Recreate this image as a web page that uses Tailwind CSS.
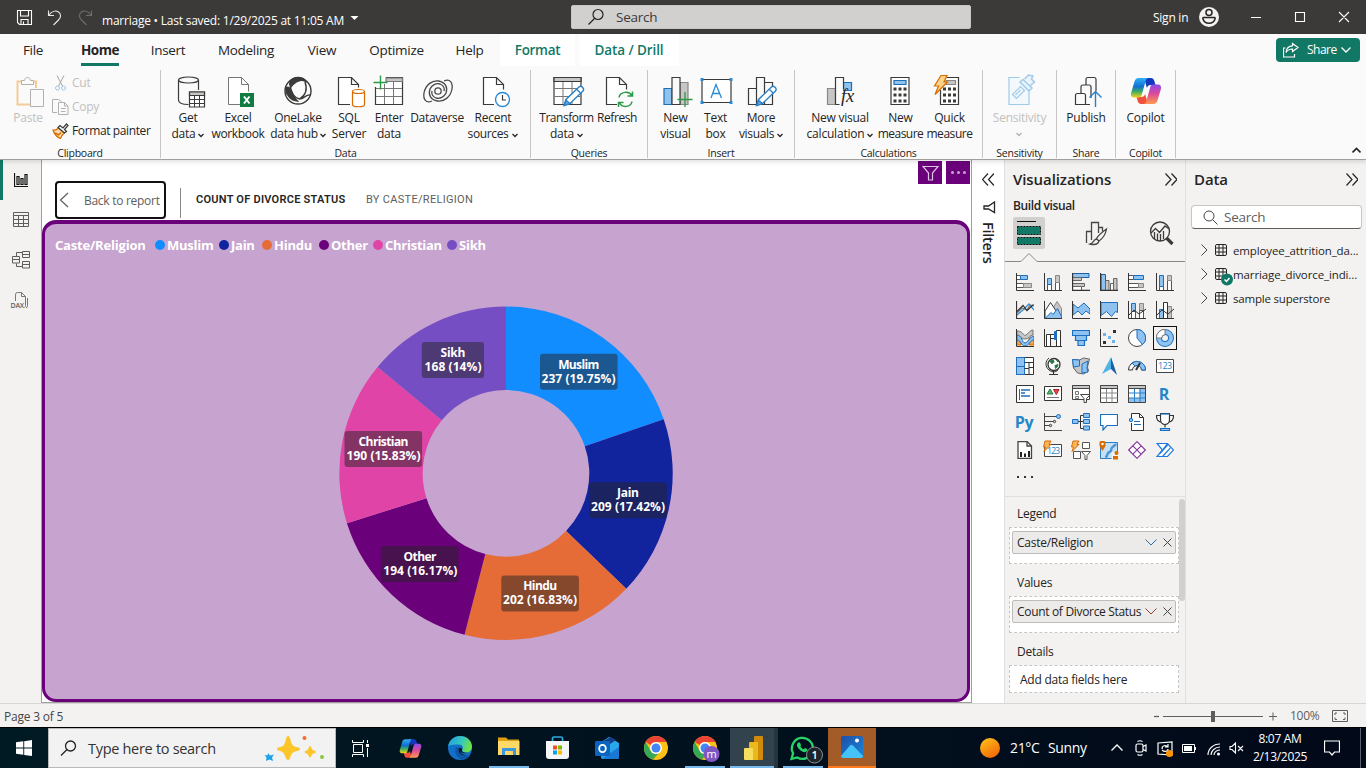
<!DOCTYPE html>
<html lang="en">
<head>
<meta charset="utf-8">
<title>marriage - Power BI Desktop</title>
<script src="https://cdn.jsdelivr.net/npm/@tailwindcss/browser@4"></script>
</head>
<body class="w-[1366px] h-[768px] overflow-hidden flex flex-col bg-[#f3f2f1] text-[#252423] text-[12px] leading-4 tracking-[-0.25px] whitespace-nowrap font-['Open_Sans','Noto_Sans',sans-serif]">

<!-- Title bar -->
<header class="h-[34px] shrink-0 bg-[#3b3a39] text-white flex items-center">
  <svg class="ml-4 mt-[1px]" width="17" height="17" viewBox="0 0 17 17" fill="none" stroke="#fff" stroke-width="1.1"><path d="M1.5 1.5h14v14h-12l-2-2zM4.500 1.500v5.500h8v-5.500M5 15.500v-5h7v5M7.500 15v-2.500"/></svg>
  <svg class="ml-[14px]" width="16" height="17" viewBox="0 0 16 17" fill="none" stroke="#e8e8e8" stroke-width="1.1"><path d="M1.500 1.500v5h5.500M1.500 6.500c3-4 7-5.500 10-3.500 3 2.200 2.500 5.500 0 8L6.500 16"/></svg>
  <svg class="ml-[15px]" width="16" height="17" viewBox="0 0 16 17" fill="none" stroke="#6e6d6b" stroke-width="1.1"><path d="M13.500 1.500v5H8M13.500 6.500c-3-4-7-5.500-10-3.500C.500 5.200 1 8.500 3.500 11l5 5"/></svg>
  <span class="ml-[8px] mt-[7px] w-[243px] tracking-[-0.23px]">marriage • Last saved: 1/29/2025 at 11:05 AM</span>
  <svg class="ml-[5px] mt-[1px]" width="9" height="6"><path d="M.5 1h8L4.500 5z" fill="#fff"/></svg>
  <div class="ml-[212px] w-[400px] h-[24px] bg-[#d2d0ce] border border-[#c8c6c4] rounded-[2px] flex items-center text-[#3b3a39] text-[13.500px]">
    <svg class="ml-[15px]" width="18" height="18" viewBox="0 0 18 18" fill="none" stroke="#252423" stroke-width="1.200"><circle cx="11" cy="6.500" r="5"/><path d="M7.500 10.500L1.500 16.500"/></svg>
    <span class="ml-[11px]">Search</span>
  </div>
  <span class="ml-[182px] mt-[2px] w-[36px]">Sign in</span>
  <svg class="ml-[10px] mt-[-1px]" width="20" height="20" viewBox="0 0 20 20"><circle cx="10" cy="10" r="10" fill="#f3f2f1"/><g fill="none" stroke="#252423" stroke-width="1.500"><circle cx="10" cy="5.500" r="3"/><path d="M4.500 10.500h11c.6 0 .8.500.6 1.200-.8 3-3.300 4.600-6.100 4.600s-5.300-1.600-6.100-4.600c-.2-.7 0-1.200.6-1.200z"/></g></svg>
  <svg class="ml-[32px]" width="100" height="12" viewBox="0 0 100 12" fill="none" stroke="#fff" stroke-width="1.100"><path d="M0 6.500h10M44.500 1.500h9v9h-9zM88 1l10 10M98 1L88 11"/></svg>
</header>

<!-- Ribbon -->
<section class="relative z-10 h-[126px] shrink-0 bg-[#fafafa] border-b border-[#a19f9d] shadow-[0_2px_4px_rgba(0,0,0,0.12)] flex flex-col">
  <nav class="h-[32px] flex text-[13.500px] tracking-[-0.300px]">
    <div class="w-[66px] flex items-center justify-center">File</div>
    <div class="w-[68px] flex items-center justify-center font-bold"><span class="h-full flex items-center border-b-[3px] border-[#117865] pt-[2px] w-[38px] justify-center tracking-[-0.500px]">Home</span></div>
    <div class="w-[68px] flex items-center justify-center">Insert</div>
    <div class="w-[88px] flex items-center justify-center">Modeling</div>
    <div class="w-[64px] flex items-center justify-center">View</div>
    <div class="w-[85px] flex items-center justify-center">Optimize</div>
    <div class="w-[61px] flex items-center justify-center">Help</div>
    <div class="w-[75px] mr-1 flex items-center justify-center bg-white text-[#117865] font-semibold">Format</div>
    <div class="w-[100px] flex items-center justify-center bg-white text-[#117865] font-semibold tracking-[-0.100px]">Data / Drill</div>
    <div class="ml-[597px] mt-[4px] w-[84px] h-[24px] rounded-[4px] bg-[#117865] text-white font-medium text-[12px] flex items-center">
      <svg class="ml-[7px] shrink-0" width="16" height="16" viewBox="0 0 16 16" fill="none" stroke="#fff" stroke-width="1.200"><path d="M2.500 6h-2v9h11v-3"/><path d="M9.500 1.500l5.500 4-5.500 4v-2.500c-3 0-5 1-6.500 3.500.3-4 2.500-6.500 6.500-6.700z"/></svg>
      <span class="ml-[8px] w-[30px] tracking-[-0.500px]">Share</span>
      <svg class="ml-[4px] shrink-0" width="10" height="6" fill="none" stroke="#fff" stroke-width="1.300"><path d="M.5.500l4.500 4.500L9.500.500"/></svg>
    </div>
  </nav>

  <div class="h-[93px] pt-[4px] flex">
    <!-- Clipboard -->
    <div class="w-[161px] h-[88px] border-r border-[#c8c6c4] flex flex-col">
      <div class="h-[74px] flex">
        <div class="w-[56px] flex flex-col items-center text-[#c2c0be]">
          <svg class="mt-[6px] shrink-0" width="32" height="32" viewBox="12 76 32 32" fill="none" stroke="#b3b1af"><path d="M24 81.500h-6.500v23h12.500M36 88v-6.500h-6" stroke="#f2cb96" stroke-width="2"/><path d="M21.500 84.500v-4h3c0-4 6-4 6 0h3v4z" fill="#fafafa"/><path d="M30.500 89.500h13v17h-13z" fill="#fafafa"/></svg>
          <span class="mt-[2px]">Paste</span>
        </div>
        <div class="flex flex-col pt-[1px] text-[#c2c0be]">
          <div class="h-[24px] flex items-center -ml-[1px]"><svg width="11" height="16" viewBox="0 0 11 16" fill="none" stroke="#a6a4a2"><path d="M2 .500l5.500 10.500M9 .500L3.500 11"/><g stroke="#9cc7e6"><circle cx="2.500" cy="13" r="2"/><circle cx="8.500" cy="13" r="2"/></g></svg><span class="ml-[6px]">Cut</span></div>
          <div class="h-[24px] flex items-center -ml-[4px]"><svg width="17" height="16" viewBox="0 0 17 16" fill="none" stroke="#b3b1af"><path d="M5 13.500H.5V.500h6l3 2"/><path d="M6.500 3.500h6l3.500 3.500v8.500H6.500zM12.500 3.500v3.500H16M9 9.500h4.500M9 12.500h4.500"/></svg><span class="ml-[3px]">Copy</span></div>
          <div class="h-[24px] flex items-center -ml-[4px] text-[#252423]"><svg width="17" height="16" viewBox="0 0 17 16" fill="none"><path d="M1 7c2.500.500 4-.5 5.500-2l5.500 5c-2 2-3 3.500-3.500 5.500C6 14.500 2.500 12 1 7z" fill="#fbdcae" stroke="#d86c00" stroke-width="1.200"/><path d="M3 10l3 1.500M6 12.500l3-3" stroke="#d86c00" stroke-width="1.500"/><path d="M6 4.500l2-2 3 2.500 3.500-4 1.500 1.500L12.500 6.500l2 2L12.500 10z" fill="#fafafa" stroke="#3b3a39" stroke-width="1.200"/></svg><span class="ml-[3px] tracking-[-0.380px]">Format painter</span></div>
        </div>
      </div>
      <div class="text-center text-[10.500px] h-[14px] leading-[19px]">Clipboard</div>
    </div>

    <!-- Data -->
    <div class="w-[370px] h-[88px] border-r border-[#c8c6c4] flex flex-col">
      <div class="h-[74px] flex pl-[4px] pt-[6px] text-center">
        <div class="w-[46px] flex flex-col items-center"><svg class="shrink-0 overflow-visible mb-[2px]" width="32" height="32" viewBox="172 76 32 32" fill="none" stroke="#3b3a39" stroke-width="1.200"><path d="M178.500 80v20c0 3 4 4.500 10 4.500M198.500 80v10"/><ellipse cx="188.500" cy="80" rx="10" ry="3"/><path d="M189.500 92h15v15h-15z" fill="#fff"/><path d="M189.500 92h15v3.500h-15z" fill="#c8c6c4"/><path d="M189.500 99.500h15M189.500 103.500h15M194.500 95.500v11.500M199.500 95.500v11.500" stroke-width="1"/></svg><span>Get</span><span class="flex items-center">data<svg class="ml-[3px] mt-[3px]" width="6" height="5" fill="none" stroke="#252423" stroke-width="1.300"><path d="M.5 1l2.500 2.500L5.500 1"/></svg></span></div>
        <div class="w-[54px] flex flex-col items-center"><svg class="shrink-0 overflow-visible mb-[2px]" width="32" height="32" viewBox="222 76 32 32" fill="none" stroke="#797775"><path d="M240 104.500h-11.500v-27h13l7 7v7M241.500 77.500v7h7" fill="#fff"/><path d="M240 93h14v14h-14z" fill="#107c41" stroke="none"/><path d="M244 96.500l5.500 7M249.500 96.500l-5.500 7" stroke="#fff" stroke-width="2"/></svg><span>Excel</span><span class="tracking-[-0.350px]">workbook</span></div>
        <div class="w-[66px] flex flex-col items-center"><svg class="shrink-0 overflow-visible mb-[2px]" width="32" height="32" viewBox="282 76 32 32" fill="none" stroke="#3b3a39" stroke-width="1.400"><circle cx="298" cy="91" r="13"/><path d="M290 81.500c4-6 14-5 15.500 0-3-2-8-1.500-12.500 3-1 1-2 2-2.500 3-.8-2-1-4-.5-6zM285.500 89c1.500-3 4.500-2 6 2 1.500 4.500 3 7.500 6 10-6 0-11-5-12-12z" fill="#3b3a39"/><path d="M305 82c2.500 7 1 13-5.500 17M290.500 87c.5 6 4 11 9 12 5 0 6-5 11.500-4"/></svg><span>OneLake</span><span class="flex items-center tracking-[-0.350px]">data hub<svg class="ml-[2px] mt-[3px]" width="6" height="5" fill="none" stroke="#252423" stroke-width="1.300"><path d="M.5 1l2.500 2.500L5.500 1"/></svg></span></div>
        <div class="w-[36px] flex flex-col items-center"><svg class="shrink-0 overflow-visible mb-[2px]" width="32" height="32" viewBox="333 76 32 32" fill="none" stroke="#3b3a39" stroke-width="1.200"><path d="M350 104.500h-11.500v-27h13l7 7v3M351.500 77.500v7h7" fill="#fff"/><path d="M352.500 91.500v13c0 3 12 3 12 0v-13" fill="#fff" stroke="#d86c00"/><ellipse cx="358.500" cy="91.500" rx="6" ry="2" fill="#fff" stroke="#d86c00"/></svg><span>SQL</span><span>Server</span></div>
        <div class="w-[44px] flex flex-col items-center"><svg class="shrink-0 overflow-visible mb-[2px]" width="32" height="32" viewBox="373 76 32 32" fill="none" stroke="#3b3a39" stroke-width="1.200"><path d="M375.500 87v17.500h27v-27H386" fill="#fff"/><path d="M386 78h16.500v3.500H386z" fill="#c8c6c4" stroke="#797775"/><path d="M376 88.500h26M376 96.500h26M384.500 84v20M393.500 82v22" stroke="#797775" stroke-width="1"/><path d="M373.500 82.500h14M380.500 75.500v14" stroke="#2b9a46" stroke-width="1.400"/></svg><span>Enter</span><span>data</span></div>
        <div class="w-[52px] flex flex-col items-center"><svg class="shrink-0 overflow-visible mb-[2px]" width="32" height="32" viewBox="421 76 32 32" fill="none" stroke="#4a4948" stroke-width="1.300"><g id="swirl"><path d="M432 101c-6 3-9-2-8-8 1.500-8 8-13 14.500-12 7 1.200 9.500 6.500 7.500 12-1.700 4.200-6 6-10 5-3-1-5-4-4-7"/></g><path transform="rotate(180 438 91)" d="M432 101c-6 3-9-2-8-8 1.500-8 8-13 14.500-12 7 1.200 9.500 6.500 7.500 12-1.700 4.200-6 6-10 5-3-1-5-4-4-7"/><circle cx="438" cy="91" r="3.200"/></svg><span class="tracking-[-0.300px]">Dataverse</span></div>
        <div class="w-[60px] flex flex-col items-center"><svg class="shrink-0 overflow-visible mb-[2px]" width="32" height="32" viewBox="477 76 32 32" fill="none" stroke="#3b3a39" stroke-width="1.200"><path d="M494 104.500h-10.500v-27h13l7 7v5M496.500 77.500v7h7" fill="#fff"/><circle cx="502.500" cy="99.500" r="7" fill="#fff" stroke="#2a8ad4" stroke-width="1.400"/><path d="M502.500 95v5h3.500"/></svg><span>Recent</span><span class="flex items-center tracking-[-0.350px]">sources<svg class="ml-[4px] mt-[3px]" width="6" height="5" fill="none" stroke="#252423" stroke-width="1.300"><path d="M.5 1l2.500 2.500L5.500 1"/></svg></span></div>
      </div>
      <div class="text-center text-[10.500px] h-[14px] leading-[19px]">Data</div>
    </div>

    <!-- Queries -->
    <div class="w-[117px] h-[88px] border-r border-[#c8c6c4] flex flex-col">
      <div class="h-[74px] flex pl-[6px] pt-[6px] text-center">
        <div class="w-[59px] flex flex-col items-center"><svg class="shrink-0 overflow-visible mb-[2px]" width="32" height="32" viewBox="550.500 76 32 32" fill="none" stroke="#3b3a39" stroke-width="1.200"><path d="M553.500 77.500h27v27h-27z" fill="#fff"/><path d="M553.500 77.500h27v4h-27z" fill="#c8c6c4"/><path d="M554 88.500h26M554 96.500h26M562.500 82v22M571.500 82v22" stroke="#797775" stroke-width="1"/><path d="M563.500 105.500l2-6 13-12.500c2-2 6 1.500 4 4l-13 12.500z" fill="#fff" stroke="#2a7fc5" stroke-width="1.400"/><path d="M564 105.500l1.500-5.500 4 3.500z" fill="#5ba7e8" stroke="#2a7fc5"/><path d="M576.500 89.500l3.500 3.500" stroke="#2a7fc5"/></svg><span class="tracking-[-0.450px]">Transform</span><span class="flex items-center">data<svg class="ml-[3px] mt-[3px]" width="6" height="5" fill="none" stroke="#252423" stroke-width="1.300"><path d="M.5 1l2.500 2.500L5.500 1"/></svg></span></div>
        <div class="w-[42px] flex flex-col items-center"><svg class="shrink-0 overflow-visible mb-[2px]" width="32" height="32" viewBox="601 76 32 32" fill="none" stroke="#3b3a39" stroke-width="1.200"><path d="M617 104.500h-10.500v-27h13l7 7v5M619.500 77.500v7h7" fill="#fff"/><path d="M618 92h16v15h-16z" fill="#fafafa" stroke="none"/><g stroke="#2b9a46" stroke-width="1.500"><path d="M619 97.500c1-6 10-7 13-2M632.500 91.500v4.500h-5M632 101.500c-1 6-10 6.500-12.500 1.500M618.500 107v-4.500h5"/></g></svg><span class="tracking-[-0.400px]">Refresh</span></div>
      </div>
      <div class="text-center text-[10.500px] h-[14px] leading-[19px]">Queries</div>
    </div>

    <!-- Insert -->
    <div class="w-[147px] h-[88px] border-r border-[#c8c6c4] flex flex-col">
      <div class="h-[74px] flex pl-[6px] pt-[6px] text-center">
        <div class="w-[43px] flex flex-col items-center"><svg class="shrink-0 overflow-visible mb-[2px]" width="32" height="32" viewBox="659.500 76 32 32" fill="none" stroke="#3b3a39" stroke-width="1.200"><path d="M679.500 82.500h8v22h-8z" fill="#c8c6c4" stroke="#8a8886"/><path d="M663.500 88.500h8v16h-8z" fill="#8fc2ee" stroke="#1b6fb5"/><path d="M671.500 77.500h8v27h-8z" fill="#fafafa"/><path d="M677 99.500h15M684.500 92v15" stroke="#2b9a46" stroke-width="1.300"/></svg><span>New</span><span>visual</span></div>
        <div class="w-[37px] flex flex-col items-center"><svg class="shrink-0 overflow-visible mb-[2px]" width="32" height="32" viewBox="699.500 76 32 32" fill="none" stroke="#3b3a39" stroke-width="1.200"><path d="M701.500 79.500h29v23h-29z" fill="#fff"/><path d="M710.500 98l5-13.500 5.500 13.500M712 93.500h7.500" stroke="#2a8ad4" stroke-width="1.300"/><path d="M700 78h3v3h-3zM729 78h3v3h-3zM700 101h3v3h-3zM729 101h3v3h-3z" fill="#2a8ad4" stroke="none"/></svg><span>Text</span><span>box</span></div>
        <div class="w-[54px] flex flex-col items-center"><svg class="shrink-0 overflow-visible mb-[2px]" width="32" height="32" viewBox="745 76 32 32" fill="none" stroke="#3b3a39" stroke-width="1.200"><path d="M748.500 88.500h8v16h-8zM764.500 82.500h8v22h-8zM756.500 77.500h8v27h-8z" fill="#fafafa"/><path d="M756.500 105.500l2-6 13-12.500c2-2 6 1.500 4 4l-13 12.500z" fill="#fff" stroke="#2a7fc5" stroke-width="1.400"/><path d="M757 105.500l1.500-5.500 4 3.500z" fill="#5ba7e8" stroke="#2a7fc5"/><path d="M769.500 89.500l3.500 3.500" stroke="#2a7fc5"/></svg><span>More</span><span class="flex items-center tracking-[-0.350px]">visuals<svg class="ml-[3px] mt-[3px]" width="6" height="5" fill="none" stroke="#252423" stroke-width="1.300"><path d="M.5 1l2.500 2.500L5.500 1"/></svg></span></div>
      </div>
      <div class="text-center text-[10.500px] h-[14px] leading-[19px]">Insert</div>
    </div>

    <!-- Calculations -->
    <div class="w-[188px] h-[88px] border-r border-[#c8c6c4] flex flex-col">
      <div class="h-[74px] flex pl-[6px] pt-[6px] text-center">
        <div class="w-[78px] flex flex-col items-center"><svg class="shrink-0 overflow-visible mb-[2px]" width="32" height="32" viewBox="824 76 32 32" fill="none" stroke="#3b3a39" stroke-width="1.200"><path d="M843.500 82.500h8v8h-8z" fill="#8fc2ee" stroke="#1b6fb5"/><path d="M827.500 88.500h8v16h-8z" fill="#c8c6c4" stroke="#8a8886"/><path d="M835.500 104.500v-27h8v12M835.500 104.500h4" fill="#fafafa"/><text x="841" y="101.500" font-family="Liberation Serif" font-style="italic" font-size="18.500" fill="#252423" stroke="none">fx</text></svg><span>New visual</span><span class="flex items-center tracking-[-0.200px]">calculation<svg class="ml-[3px] mt-[3px]" width="6" height="5" fill="none" stroke="#252423" stroke-width="1.300"><path d="M.5 1l2.500 2.500L5.500 1"/></svg></span></div>
        <div class="w-[43px] flex flex-col items-center"><svg class="shrink-0 overflow-visible mb-[2px]" width="32" height="32" viewBox="884.500 76 32 32" fill="none" stroke="#3b3a39" stroke-width="1.200"><path d="M890.500 77.500h18v27h-18z" fill="#fff"/><path d="M893.500 80.500h12v4h-12z" fill="#8fc2ee" stroke="#1b6fb5"/><path d="M893 89h13M893 95h13M893 101h13" stroke-width="3" stroke-dasharray="3 2"/></svg><span>New</span><span class="tracking-[-0.500px]">measure</span></div>
        <div class="w-[55px] flex flex-col items-center"><svg class="shrink-0 overflow-visible mb-[2px]" width="32" height="32" viewBox="934 76 32 32" fill="none" stroke="#3b3a39" stroke-width="1.200"><path d="M940.500 90v14.500h18v-27h-12" fill="#fff"/><path d="M946 80.500h9.500v4h-9.500z" fill="#c8c6c4" stroke="#8a8886"/><path d="M943 89h13M943 95h13M943 101h13" stroke-width="3" stroke-dasharray="3 2"/><path d="M941 75.500h6l-3 6.500h3.500L935 94.500l3.500-8.500h-4z" fill="#fbd28a" stroke="#d86c00"/></svg><span>Quick</span><span class="tracking-[-0.450px]">measure</span></div>
      </div>
      <div class="text-center text-[10.500px] h-[14px] leading-[19px]">Calculations</div>
    </div>

    <!-- Sensitivity -->
    <div class="w-[74px] h-[88px] border-r border-[#c8c6c4] flex flex-col items-center">
      <div class="h-[74px] pt-[6px] flex flex-col items-center text-[#c2c0be]"><svg class="shrink-0 overflow-visible mb-[2px]" width="32" height="32" viewBox="1003.500 76 32 32" fill="none" stroke="#9fcbea" stroke-width="1.200"><path d="M1020 77.500h-10.500v27h20v-13" fill="#f3f8fc"/><path d="M1013 94.500l8-8 4 4-8 8zM1016 95l5-5" /><path d="M1020.500 82l3-2.500 9 8.500-3 3zM1025 79l4-4 4.500 1-1.500 3 3 3-4 3.500" fill="#eaf4fb" stroke-width="1.500"/></svg><span>Sensitivity</span><svg class="mt-[6px]" width="6" height="5" fill="none" stroke="#b3b1af" stroke-width="1.300"><path d="M.5 1l2.500 2.500L5.500 1"/></svg></div>
      <div class="text-[10.500px] h-[14px] leading-[19px]">Sensitivity</div>
    </div>
    <!-- Share -->
    <div class="w-[59px] h-[88px] border-r border-[#c8c6c4] flex flex-col items-center">
      <div class="h-[74px] pt-[6px] flex flex-col items-center"><svg class="shrink-0 overflow-visible mb-[2px]" width="32" height="32" viewBox="1070 76 32 32" fill="none" stroke="#3b3a39" stroke-width="1.200"><path d="M1090 104.500h-14.500v-9q0-2 2-2h3.500v-6.500q0-2 2-2h3v-5.500q0-2 2-2h6q2 0 2 2V91M1081 93.500h2.500q2 0 2 2v9M1086 85h3q2 0 2 2v11"/><path d="M1095.500 107V92M1089.500 97.500l6-6 6 6" stroke="#2a7fc5" stroke-width="1.400"/></svg><span>Publish</span></div>
      <div class="text-[10.500px] h-[14px] leading-[19px]">Share</div>
    </div>
    <!-- Copilot -->
    <div class="w-[60px] h-[88px] border-r border-[#c8c6c4] flex flex-col items-center">
      <div class="h-[74px] pt-[6px] flex flex-col items-center">
        <svg class="shrink-0 mb-[2px] overflow-visible" width="32" height="32" viewBox="0 0 32 32">
          <defs>
            <linearGradient id="cpA" x1="0" y1="0" x2="0" y2="1"><stop offset="0" stop-color="#2fb0f5"/><stop offset=".45" stop-color="#0f6fd0"/><stop offset=".7" stop-color="#3fae5f"/><stop offset="1" stop-color="#f6d21c"/></linearGradient>
            <linearGradient id="cpB" x1="0" y1="0" x2="0" y2="1"><stop offset="0" stop-color="#8d4be8"/><stop offset=".45" stop-color="#d9489e"/><stop offset="1" stop-color="#ff9a4d"/></linearGradient>
          </defs>
          <g id="copilot"><path d="M14 2h7c2 0 2.800 1.200 3.500 3.500l1 3.500h-5c-2 0-3 1-3.600 3z" fill="#1439c0"/><path d="M18 28h-7c-2 0-2.800-1.200-3.500-3.500l-1-3.500h5c2 0 3-1 3.600-3z" fill="#f0503c"/><path d="M8.500 2H19c-2 0-2.800 1-3.500 3.500L11.700 19c-.6 1.800-1.500 2.500-3.200 2.500H4c-2.500 0-3.600-2-2.900-4.500L4.500 5.500C5.200 3.200 6.500 2 8.500 2z" fill="url(#cpA)"/><path d="M23.500 28H13c2 0 2.800-1 3.500-3.500L20.300 11c.6-1.800 1.500-2.500 3.200-2.500H28c2.500 0 3.600 2 2.900 4.500L27.500 24.500c-.7 2.300-2 3.500-4 3.500z" fill="url(#cpB)"/></g>
        </svg>
        <span>Copilot</span></div>
      <div class="text-[10.500px] h-[14px] leading-[19px]">Copilot</div>
    </div>
    <svg class="self-end ml-[176px] mb-[5px]" width="9" height="7" fill="none" stroke="#252423" stroke-width="1.700"><path d="M.5 5.500L4.500 1.500l4 4"/></svg>
  </div>
</section>

<!-- Workspace -->
<main class="h-[543px] shrink-0 flex">
  <!-- View switcher -->
  <aside class="w-[41px] shrink-0 flex flex-col">
    <div class="h-[40px] border-l-[3px] border-[#117865] flex items-center pl-[11px]"><svg width="14" height="14" viewBox="0 0 14 14" fill="none" stroke="#111" stroke-width="1.200"><path d="M.5 0v13.500H14M3 3.500h2v8H3zM7 5.500h2v6H7zM11 1.500h2v10h-2z"/></svg></div>
    <div class="h-[40px] flex items-center pl-[13px]"><svg width="16" height="16" viewBox="0 0 16 16" fill="none" stroke="#605e5c"><path d="M.5.500h15v14H.500zM.500 3.500h15M.500 7.500h15M.500 11.500h15M5.500 3.500v11M10.500 3.500v11"/></svg></div>
    <div class="h-[40px] flex items-center pl-[12px]"><svg width="19" height="18" viewBox="0 0 19 18" fill="none" stroke="#605e5c"><path d="M10.500.500h7v6h-7zM10.500 3.500h7M10.500 10.500h7v6.500h-7zM10.500 13.500h7M.500 5.500h7v6.500h-7zM.500 8.500h7M4.500 5V1.500h6M4.500 12.500v3h6"/></svg></div>
    <div class="h-[40px] flex items-center pl-[10px]"><svg class="overflow-visible" width="19" height="17" viewBox="0 0 19 17" fill="none" stroke="#797775"><path d="M5.500 9V2.500q0-2 2-2h4l4 4v9q0 1.500-1 2M11.500.500v4h4M17.500 6v7.500q0 2-1.500 2.500"/><text x="0.500" y="15.500" font-size="7" fill="#605e5c" stroke="none" letter-spacing="-.2" font-weight="600">DAX</text></svg></div>
  </aside>

  <!-- Report canvas -->
  <section class="relative w-[931px] shrink-0 bg-white border-l border-r border-[#a19f9d] border-b flex flex-col">
    <div class="h-[60px] shrink-0 flex">
      <div class="ml-[13px] mt-[21px] w-[111px] h-[38px] border-2 border-[#111] rounded-[4px] flex items-center text-[#605e5c]">
        <svg class="ml-[2px]" width="10" height="16" fill="none" stroke="#605e5c" stroke-width="1.200"><path d="M9 1L1.500 8 9 15"/></svg>
        <span class="ml-[15px] mt-[1px] tracking-[-0.280px]">Back to report</span>
      </div>
      <div class="ml-[14px] mt-[28px] h-[30px] w-px bg-[#8a8886]"></div>
      <span class="ml-[15px] mt-[32px] w-[150px] text-[11px] font-semibold tracking-[0.250px] font-['Roboto']">COUNT OF DIVORCE STATUS</span>
      <span class="ml-[20px] mt-[32px] text-[11px] text-[#605e5c] tracking-[0.300px] font-['Roboto']">BY CASTE/RELIGION</span>
    </div>
    <div class="w-[928px] h-[482px] shrink-0 rounded-[14px] border-[3px] border-t-[4px] border-[#6b007b] bg-[#c7a4cf] flex flex-col">
      <div class="mt-[13px] pl-[10px] h-[16px] flex items-center font-bold text-white text-[13px] tracking-[-0.250px]">
        <span class="w-[100px] tracking-[-0.200px]">Caste/Religion</span>
        <i class="w-[10px] h-[10px] rounded-full bg-[#118dff]"></i><span class="ml-[2px] w-[52px]">Muslim</span>
        <i class="w-[10px] h-[10px] rounded-full bg-[#12239e]"></i><span class="ml-[2px] w-[31px]">Jain</span>
        <i class="w-[10px] h-[10px] rounded-full bg-[#e66c37]"></i><span class="ml-[2px] w-[45px]">Hindu</span>
        <i class="w-[10px] h-[10px] rounded-full bg-[#6b007b]"></i><span class="ml-[2px] w-[42px]">Other</span>
        <i class="w-[10px] h-[10px] rounded-full bg-[#e044a7]"></i><span class="ml-[2px] w-[62px]">Christian</span>
        <i class="w-[10px] h-[10px] rounded-full bg-[#744ec2]"></i><span class="ml-[2px]">Sikh</span>
      </div>
      <svg class="ml-[285px] mt-[43px]" width="350" height="350" viewBox="330 296 350 350">
        <g transform="translate(506 473.300)">
          <path fill="#118dff" d="M0-166.700A166.700 166.700 0 0 1 157.710-54L78.800-27A83.300 83.300 0 0 0 0-83.300z"/>
          <path fill="#12239e" d="M157.710-54A166.700 166.700 0 0 1 120.320 115.380L60.100 57.700A83.300 83.300 0 0 0 78.800-27z"/>
          <path fill="#e66c37" d="M120.320 115.380A166.700 166.700 0 0 1-41.460 161.460L-20.700 80.700A83.300 83.300 0 0 0 60.100 57.700z"/>
          <path fill="#6b007b" d="M-41.460 161.460A166.700 166.700 0 0 1-159.070 49.850L-79.500 24.900A83.300 83.300 0 0 0-20.700 80.700z"/>
          <path fill="#e044a7" d="M-159.070 49.850A166.700 166.700 0 0 1-128.440-106.260L-64.200-53.100A83.300 83.300 0 0 0-79.500 24.900z"/>
          <path fill="#744ec2" d="M-128.440-106.260A166.700 166.700 0 0 1 0-166.700V-83.300A83.300 83.300 0 0 0-64.200-53.100z"/>
        </g>
        <g fill="#252423" fill-opacity=".5">
          <rect x="540" y="353.700" width="77.600" height="36" rx="3"/><rect x="589.200" y="482.300" width="77.600" height="36" rx="3"/><rect x="501.300" y="575.500" width="77.600" height="36" rx="3"/><rect x="381" y="546" width="77.600" height="36" rx="3"/><rect x="344.500" y="431" width="77.600" height="36" rx="3"/><rect x="421.800" y="342" width="62.200" height="36" rx="3"/>
        </g>
        <g fill="#fff" font-size="12" font-weight="700" text-anchor="middle" letter-spacing="0">
          <text x="578.700" y="369" textLength="41">Muslim</text><text x="578.500" y="383" textLength="74">237 (19.75%)</text>
          <text x="628" y="497" textLength="22">Jain</text><text x="628" y="511" textLength="74">209 (17.42%)</text>
          <text x="540.200" y="590" textLength="34">Hindu</text><text x="540" y="604" textLength="74">202 (16.83%)</text>
          <text x="420" y="561" textLength="33">Other</text><text x="420.300" y="575" textLength="74">194 (16.17%)</text>
          <text x="383.500" y="446" textLength="50">Christian</text><text x="383.500" y="460" textLength="74">190 (15.83%)</text>
          <text x="453" y="357" textLength="25">Sikh</text><text x="453" y="371" textLength="57">168 (14%)</text>
        </g>
      </svg>
    </div>
    <div class="absolute top-px right-px flex gap-[4px]">
      <div class="w-[24px] h-[23px] bg-[#6b007b] flex items-center justify-center"><svg width="17" height="16" viewBox="0 0 17 16" fill="none" stroke="#dcc4e2" stroke-width="1.200"><path d="M1 1.500h15l-5.500 6.500v7h-4V8z"/></svg></div>
      <div class="w-[24px] h-[23px] bg-[#6b007b] flex items-center justify-center gap-[3px]"><i class="w-[3px] h-[3px] rounded-full bg-[#c7a4cf]"></i><i class="w-[3px] h-[3px] rounded-full bg-[#c7a4cf]"></i><i class="w-[3px] h-[3px] rounded-full bg-[#c7a4cf]"></i></div>
    </div>
  </section>

  <!-- Filters -->
  <aside class="w-[33px] shrink-0 bg-white border-r border-[#e1dfdd] flex flex-col items-center">
    <svg class="mt-[13px]" width="12" height="13" fill="none" stroke="#252423" stroke-width="1.200"><path d="M6 .500L.500 6.500l5.500 6M12 .500L6.500 6.500l5.500 6"/></svg>
    <svg class="mt-[15px] ml-[3px]" width="13" height="13" fill="none" stroke="#252423" stroke-width="1.300"><path d="M11.500 1v10.500L5.500 8H1V5h4.500z"/></svg>
    <span class="mt-[8px] [writing-mode:vertical-rl] text-[14.500px] font-semibold">Filters</span>
  </aside>

  <!-- Visualizations -->
  <aside class="w-[181px] shrink-0 border-r border-[#e1dfdd] flex flex-col">
    <div class="h-[36px] pt-[2px] flex items-center pl-[8px]"><span class="w-[152px] text-[15px] font-semibold tracking-[-0.080px]">Visualizations</span><svg width="12" height="13" fill="none" stroke="#252423" stroke-width="1.200"><path d="M.500.500l5.500 6-5.500 6M6.500.500l5.500 6-5.500 6"/></svg></div>
    <div class="pl-[8px] pt-[2px] h-[21px] font-semibold leading-[16px] tracking-[-0.380px]">Build visual</div>
    <div class="h-[32px] pl-[8px] flex">
      <div class="w-[32px] h-[32px] bg-[#d2d0ce] rounded-[2px] flex items-center justify-center"><svg width="24" height="24" viewBox="0 0 24 24"><path d="M0 .500h19" stroke="#111"/><path d="M.500 5.500h23v8H.500zM.500 16.500h23v7H.500z" fill="#117865" stroke="#111" stroke-dasharray="2 1"/></svg></div>
      <svg class="ml-[40px] mt-[4px]" width="24" height="25" viewBox="0 0 24 25" fill="none" stroke="#484644" stroke-width="1.300"><path d="M1.500 22V10.500h5M6.500 19V1.500h7V12M13.500 6.500h4v4"/><path d="M21.500 8c-5 3.500-9 7-10 10l2.500 2c3-2 6.500-6.500 7.500-12zM11.500 18c-3 .500-3 4-6.500 5 4 1 8 .500 9-3z" fill="#f3f2f1"/></svg>
      <svg class="ml-[40px] mt-[4px]" width="25" height="25" viewBox="0 0 25 25" fill="none" stroke="#3b3a39" stroke-width="1.300"><circle cx="11" cy="10.500" r="9.500"/><path d="M2 12l4.500-4.500 4 4L16 5l3.500 2.500M5.500 11v7M8.500 12.500v7M11.500 13v7M14.500 10v8"/><path d="M17.500 17l6 6" stroke-width="3.200"/></svg>
    </div>
    <svg class="shrink-0 mt-[3px]" width="180" height="14" fill="none" stroke="#8a8886"><path d="M0 9.500h16l8-8 8 8h148"/></svg>

    <div class="h-[231px] shrink-0 border-b border-[#e1dfdd] pt-[2px] pl-[6px] flex flex-col">
      <div class="grid grid-cols-[repeat(6,28px)] auto-rows-[28px]">
        <!-- bar and column charts -->
        <svg class="m-[5px]" width="18" height="18" fill="none" stroke="#8a8886"><path d="M.500 2.500h4v4h-4zM.500 10.500h7v4h-7z" fill="#fff" stroke="#555"/><path d="M4.500 2.500h7v4h-7z" fill="#8fc2ee" stroke="#1b6fc0"/><path d="M7.500 10.500h8v4h-8z" fill="#c8c6c4"/><path d="M.500 0v17.500H18" stroke="#333"/></svg>
        <svg class="m-[5px]" width="18" height="18" fill="none" stroke="#8a8886"><path d="M3.500 11.500h4v6h-4zM11.500 9.500h4v8h-4z" fill="#fff" stroke="#555"/><path d="M3.500 5.500h4v6h-4z" fill="#8fc2ee" stroke="#1b6fc0"/><path d="M11.500 2.500h4v7h-4z" fill="#c8c6c4"/><path d="M.500 0v17.500H18" stroke="#333"/></svg>
        <svg class="m-[5px]" width="18" height="18" fill="none" stroke="#666"><path d="M.500.500h16.500v4H.500z" fill="#8fc2ee" stroke="#1b5fa0"/><path d="M.500 4.500h9v3h-9z" fill="#c8c6c4"/><path d="M.500 10.500h12v3h-12z" fill="#c8c6c4"/><path d="M.500 13.500h9v4h-9z" fill="#fff"/><path d="M.500 0v17.500H18" stroke="#333" stroke-width="1.300"/></svg>
        <svg class="m-[5px]" width="18" height="18" fill="none" stroke="#666"><path d="M1 1.500h4.500v16H1z" fill="#8fc2ee" stroke="#1b5fa0"/><path d="M5.500 7.500h3.500v10H5.500zM13.500 5.500h3.500v12h-3.500z" fill="#c8c6c4"/><path d="M10.500 10.500h3v7h-3z" fill="#fff"/><path d="M.500 0v17.500H18" stroke="#333" stroke-width="1.300"/></svg>
        <svg class="m-[5px]" width="18" height="18" fill="none" stroke="#8a8886"><path d="M.500 2.500h5v4h-5zM.500 10.500h10v4h-10z" fill="#fff" stroke="#555"/><path d="M5.500 2.500h10v4h-10z" fill="#8fc2ee" stroke="#1b6fc0"/><path d="M10.500 10.500h5v4h-5z" fill="#c8c6c4"/><path d="M.500 0v17.500H18" stroke="#333"/></svg>
        <svg class="m-[5px]" width="18" height="18" fill="none" stroke="#8a8886"><path d="M3.500 13.500h4v4h-4zM11.500 7.500h4v10h-4z" fill="#fff" stroke="#555"/><path d="M3.500 2.500h4v11h-4z" fill="#8fc2ee" stroke="#1b6fc0"/><path d="M11.500 2.500h4v5h-4z" fill="#c8c6c4"/><path d="M.500 0v17.500H18" stroke="#333"/></svg>
        <!-- line, area and combo charts -->
        <svg class="m-[5px]" width="18" height="18" fill="none" stroke="#333" stroke-width="1.200"><path d="M1 14l6-5 6-6 5 6" stroke="#2a8ad4"/><path d="M1 12l5-5 5 2 3-5 4 1" stroke="#777"/><path d="M1 10.500l6-6 4 5 6.500-6"/><path d="M.500 0v17.500H18"/></svg>
        <svg class="m-[5px]" width="18" height="18" fill="none" stroke="#333"><path d="M9 7l4-6.500 4.500 7v10H9z" fill="#c8c6c4" stroke="#8a8886"/><path d="M1 10L6.500 1.500l6 9v7H1z" fill="#fff"/><path d="M1 17.500l6-6 2 2 4.500-6 4 8v2z" fill="#8fc2ee" stroke="#1b6fc0"/><path d="M.500 0v17.500H18"/></svg>
        <svg class="m-[5px]" width="18" height="18" fill="none" stroke="#333"><path d="M1 3l5 4 6-5 6 6v5l-4-3-4 4-4-4-5 4z" fill="#8fc2ee" stroke="#1b6fc0"/><path d="M.500 0v17.500H18"/></svg>
        <svg class="m-[5px]" width="18" height="18" fill="none" stroke="#333"><path d="M1 1.500h16.500v10l-2-1-4 5-5-5-5.500 4z" fill="#8fc2ee" stroke="#1b6fc0"/><path d="M.500 0v17.500H18"/></svg>
        <svg class="m-[5px]" width="18" height="18" fill="none" stroke="#333"><path d="M3.500 2.500h4v8h-4z" fill="#8fc2ee" stroke="#1b6fc0"/><path d="M11.500 2.500h4v7h-4z" fill="#c8c6c4" stroke="#8a8886"/><path d="M3.500 10.500h4v7h-4zM11.500 9.500h4v8h-4z" fill="#fff" stroke="#555"/><path d="M1 14l5-5 5 4 7-5M.500 0v17.500H18"/></svg>
        <svg class="m-[5px]" width="18" height="18" fill="none" stroke="#333"><path d="M3.500 8.500h4v9h-4z" fill="#8fc2ee" stroke="#1b6fc0"/><path d="M11.500 5.500h4v12h-4z" fill="#c8c6c4" stroke="#8a8886"/><path d="M7.500 1.500h4v16h-4z" fill="#fff"/><path d="M1 14l5-5 6 4 6-5M.500 0v17.500H18"/></svg>
        <!-- ribbon, waterfall, funnel, scatter, pie, donut -->
        <svg class="m-[5px]" width="18" height="18" fill="none" stroke="#333"><path d="M1 2c7 0 6 6 9 4s4-5 7-5v5c-3 0-4 4-8 4S5 7 1 7z" fill="#c8c6c4" stroke="#777"/><path d="M1 9h4v7H1zM13 9h5v7h-5z" fill="#f3a24c" stroke="#d86c00"/><path d="M1 6c5 0 5 8 8 8s4-6 9-7v4c-4 0-5 6-9 6S5 11 1 11z" fill="#8fc2ee" stroke="#1b6fc0"/><path d="M.500 0v17.500H18"/></svg>
        <svg class="m-[5px]" width="18" height="18" fill="none" stroke="#333"><path d="M2.500 5.500h4v12h-4zM6.500 5.500h4v4h-4zM12.500 1.500h4v16h-4z" fill="#fff"/><path d="M10.500 2.500h2v8h-2z" fill="#1b6fc0" stroke="#1b6fc0"/><path d="M.500 0v17.500H18"/></svg>
        <svg class="m-[5px]" width="18" height="18" fill="#8fc2ee" stroke="#1b6fc0" stroke-width="1.200"><path d="M.5 1.500h17v5H.500zM3.500 6.500h11v5h-11zM6 11.500h6.500v5H6z"/></svg>
        <svg class="m-[5px]" width="18" height="18"><path d="M3 4h3v3H3zM8 7h3v3H8zM12 11h3v3h-3z" fill="#6db3ef"/><path d="M13 1h3v3h-3zM3 12h3v3H3z" fill="#333"/><path d="M.500 0v17.500H18" stroke="#333" fill="none"/></svg>
        <svg class="m-[5px]" width="18" height="18"><circle cx="9" cy="9" r="8.500" fill="#fff" stroke="#444"/><path d="M9 .500a8.500 8.500 0 0 1 5.500 15L9 9z" fill="#8fc2ee" stroke="#1b6fc0"/></svg>
        <div class="m-[2px] border border-[#111] flex items-center justify-center"><svg width="18" height="18" viewBox="0 0 18 18"><circle cx="9" cy="9" r="6" fill="none" stroke="#1b6fc0" stroke-width="6"/><circle cx="9" cy="9" r="6" fill="none" stroke="#8fc2ee" stroke-width="4"/><path d="M.300 9A8.700 8.700 0 0 1 9 .300v5.500A3.200 3.200 0 0 0 5.800 9z" fill="#fff" stroke="#777"/></svg></div>
        <!-- treemap, maps, gauge, card -->
        <svg class="m-[5px]" width="18" height="18" fill="#fff" stroke="#333"><path d="M.500.500h17v17H.500z"/><path d="M.500.500h8v9h-8zM.500 9.500h8v8h-8z" fill="#8fc2ee" stroke="#1b6fc0"/><path d="M8.500 5.500h9M13 5.500v12M8.500 11.500h4.500M13 10.500h4.500" /></svg>
        <svg class="m-[5px]" width="18" height="18" fill="none" stroke="#333"><circle cx="10" cy="7.500" r="6" fill="#fff" stroke-width="1.300"/><path d="M6.500 4c2-1.500 3.500-1 3.500.5S8 7 7 6zM11 8.500l3-1c0 2-1 3-2.500 4zM12.500 3.500l1.500.5v1z" fill="#2b7a46" stroke="#2b7a46"/><path d="M5 1C1 4 1 10 5 13s7 2 9 0M9.500 14v3M5 17.500h9"/></svg>
        <svg class="m-[5px]" width="18" height="18" fill="#c8c6c4" stroke="#666"><path d="M.500 2.500l7 .5 4-2 6 1-2 8 1 4-5 3-6-1-4-5z"/><path d="M.500 2.500l7 .5v6l-6 1zM10 7l6-3-1 7 1 4-6 1z" fill="#8fc2ee" stroke="#1b6fc0"/></svg>
        <svg class="m-[5px]" width="18" height="18"><path d="M11 0L2 17l9-5z" fill="#4fb3e8"/><path d="M11 0v12l6 6z" fill="#1b5f9e"/></svg>
        <svg class="m-[5px]" width="18" height="18" fill="#fff" stroke="#333"><path d="M.500 13a8.500 8.500 0 0 1 17 0h-4a4.500 4.500 0 0 0-9 0z"/><path d="M4 6a8.500 8.500 0 0 1 13.500 7h-4A4.500 4.500 0 0 0 7 9z" fill="#8fc2ee" stroke="#1b6fc0"/><path d="M8 13l4-7" stroke-width="2"/></svg>
        <svg class="m-[5px]" width="18" height="18"><path d="M.500 2.500h17v13H.500z" fill="#fff" stroke="#444"/><text x="2" y="12" font-size="9" fill="#2a7fc5" textLength="14">123</text></svg>
        <!-- multi-row card, kpi, slicer, table, matrix, R -->
        <svg class="m-[5px]" width="18" height="18" fill="none" stroke="#1b6fc0" stroke-width="1.500"><path d="M.500.500h17v17H.500z" fill="#fff" stroke="#333" stroke-width="1"/><path d="M5 5h9M5 8h4M5 11h9"/><path d="M3.500 4v11" stroke="#555" stroke-width="1"/></svg>
        <svg class="m-[5px]" width="18" height="18"><path d="M.500 1.500h17v14H.500z" fill="#fff" stroke="#333"/><path d="M3 9l3-5 3 5z" fill="#58b868" stroke="#2b7a46"/><path d="M9.500 4.500h5.500l-2.700 5z" fill="#e34b4b" stroke="#b02020"/><path d="M3 12.500h12" stroke="#777"/></svg>
        <svg class="m-[5px]" width="18" height="18" fill="none" stroke="#444"><path d="M.500.500h17v14H.500z" fill="#fff"/><path d="M.500.500h17v3H.500z" fill="#c8c6c4"/><path d="M3.500 6.500h3v3h-3zM3.500 11.500h3v2h-3z" stroke="#777"/><path d="M8.500 9.500h10l-4 4v4h-2.500v-4z" fill="#fff"/></svg>
        <svg class="m-[5px]" width="18" height="18" fill="none" stroke="#444"><path d="M.500.500h17v17H.500z" fill="#fff"/><path d="M.500.500h17v3H.500z" fill="#c8c6c4"/><path d="M.500 8h17M.500 13h17M6.500 4v13.500M12 4v13.500" stroke="#888"/></svg>
        <svg class="m-[5px]" width="18" height="18" fill="none" stroke="#444"><path d="M.500.500h17v17H.500z" fill="#fff"/><path d="M11.500 4h6v13.500H.500V13h11z" fill="#8fc2ee" stroke="none"/><path d="M.500.500h17v3H.500z" fill="#c8c6c4"/><path d="M.500 8h17M.500 13h17M6.500 4v13.500M12 4v13.500" stroke="#2a7fc5"/><path d="M.500.500h17v17H.500z"/></svg>
        <div class="flex items-center justify-center pr-[2px] text-[16px] font-bold text-[#2488c8]">R</div>
        <!-- python, key influencers, decomposition, Q&A, narrative, goals -->
        <div class="flex items-center justify-center pr-[2px] text-[16px] font-bold text-[#2488c8] tracking-[-0.400px]">Py</div>
        <svg class="m-[5px]" width="18" height="18" fill="none" stroke="#444"><path d="M.500 0v17.500H18M1 3.500h12M1 8.500h9M1 12.500h5"/><circle cx="14.500" cy="3.500" r="2" fill="#8fc2ee" stroke="#1b6fc0"/><circle cx="10.500" cy="8.500" r="1.200" fill="#ccc"/><circle cx="6.500" cy="12.500" r="1.200" fill="#ccc"/></svg>
        <svg class="m-[5px]" width="18" height="18" fill="#8fc2ee" stroke="#1b6fc0"><path d="M6 8.500h5M8.500 2.500v13M8.500 2.500h3M8.500 15.500h3" fill="none" stroke="#333"/><path d="M.500 6.500h5.500v4H.500zM11.500.500h6v4h-6zM11.500 6.500h6v4h-6zM11.500 13h6v4h-6z"/></svg>
        <svg class="m-[5px]" width="18" height="18" fill="#fff" stroke="#1b6fc0" stroke-width="1.200"><path d="M.500 1.500h17v11H7l-4 4.500v-4.500H.500z"/></svg>
        <svg class="m-[5px]" width="18" height="18" fill="none" stroke="#333"><path d="M3.500 5V.500h8l4 4v13h-12V10" fill="#fff"/><path d="M11.500.500v4h4" /><circle cx="3" cy="7" r="1.700" fill="#8fc2ee" stroke="#1b6fc0"/><path d="M6 8.500h6M6 11.500h7" stroke="#1b6fc0"/></svg>
        <svg class="m-[5px]" width="18" height="18" fill="#fff" stroke="#333" stroke-width="1.200"><path d="M4.500 2.500h-4c0 4 1 6 4.500 6.500M13.500 2.500h4c0 4-1 6-4.500 6.500"/><path d="M4.500.500h9v6c0 3-2 5-4.500 5s-4.500-2-4.500-5z"/><path d="M9 11.500v3"/><path d="M4.500 15.500h9v2h-9z" fill="#8fc2ee" stroke="#1b6fc0"/><path d="M4 1h10" stroke="#1b6fc0"/></svg>
        <!-- paginated report, new card, new slicer, arcgis, power apps, power automate -->
        <svg class="m-[5px]" width="18" height="18" fill="none" stroke="#444" stroke-width="1.300"><path d="M2 .500h9l4.500 4.500v12.500H2z" fill="#fff"/><path d="M11 .500v4.500h4.500"/><path d="M4 11h2v5H4zM8 12.500h2V16H8zM12 10h2v6h-2z" fill="#222" stroke="none"/></svg>
        <svg class="m-[5px] overflow-visible" width="18" height="18"><path d="M.500 3.500h17v12H.500z" fill="#fff" stroke="#444"/><text x="3" y="13" font-size="9" fill="#2a7fc5" textLength="13">123</text><path d="M1 0h6L5 3.500h2L0 10.500l1.500-4.500h-2z" fill="#f7b65c" stroke="#d86c00"/></svg>
        <svg class="m-[5px] overflow-visible" width="18" height="18" fill="#fff" stroke="#555"><path d="M10.500 1.500h7v6h-7zM1.500 10.500h7v7h-7z"/><path d="M9.500 10.500h9l-3.500 4v4h-2v-4z"/><path d="M1 0h6L5 3.500h2L0 10.500l1.500-4.500h-2z" fill="#f7b65c" stroke="#d86c00"/></svg>
        <svg class="m-[5px] overflow-visible" width="18" height="18"><path d="M.500 1.500h17v16H.500z" fill="#c5e1f7" stroke="#2a7fc5"/><path d="M16.500 3.500c-2 0-2 1.500-4 2.500s0 4-3 5-1 3-4 5.500" fill="none" stroke="#4a95d6" stroke-width="2.500"/><path d="M2.500 10L-.5 5V1.500q0-1.500 1.500-1.500h3q1.500 0 1.500 1.500V5z" fill="#d86c00"/><circle cx="2.500" cy="3" r="1.200" fill="#fff"/><path d="M11.500 11h8v8h-8z" fill="#f3f2f1"/><circle cx="16.500" cy="12" r="2" fill="#d86c00"/><path d="M13 15h5v3.500h-5z" fill="#d86c00"/></svg>
        <svg class="m-[5px]" width="18" height="18" fill="#fff" stroke="#8a3ca0" stroke-width="1.200"><path d="M9 .700L17.300 9 9 17.300.700 9z"/><path d="M4.900 4.900l8.200 8.200M13.100 4.900l-8.200 8.200"/></svg>
        <svg class="m-[5px]" width="18" height="18" fill="#fff" stroke="#1f7ae0" stroke-width="1.200"><path d="M1 2.500h10.500L17.500 9l-6 6.500H1L6.500 9z"/><path d="M6.500 9l5-6.500M4 12.500l8-9M6.500 15.500l6-6.500 2-2.500"/></svg>
      </div>
      <div class="mt-[12px] ml-[6px] flex gap-[5px]"><i class="w-[2px] h-[2px] bg-[#333]"></i><i class="w-[2px] h-[2px] bg-[#333]"></i><i class="w-[2px] h-[2px] bg-[#333]"></i></div>
    </div>

    <!-- Field wells -->
    <div class="flex-1 flex">
      <div class="w-[174px] pl-[4px] flex flex-col">
        <div class="h-[30px] pl-[8px] pt-[9px]">Legend</div>
        <div class="w-[170px] h-[37px] bg-white border border-dashed border-[#c8c6c4] p-[2px] pt-[3px]">
          <div class="w-[164px] h-[23px] bg-[#edebe9] border border-[#bebbb8] rounded-[2px] flex items-center pl-[4px]"><span class="w-[128px]">Caste/Religion</span><svg width="12" height="7" fill="none" stroke="#2a6fb0"><path d="M.500.500l5.500 5.500L11.500.500"/></svg><svg class="ml-[6px]" width="9" height="9" stroke="#444"><path d="M.500.500l8 8M8.500.500l-8 8"/></svg></div>
        </div>
        <div class="h-[32px] pl-[8px] pt-[11px]">Values</div>
        <div class="w-[170px] h-[37px] bg-white border border-dashed border-[#c8c6c4] p-[2px] pt-[3px]">
          <div class="w-[164px] h-[23px] bg-[#edebe9] border border-[#bebbb8] rounded-[2px] flex items-center pl-[4px]"><span class="w-[128px] tracking-[-0.320px]">Count of Divorce Status</span><svg width="12" height="7" fill="none" stroke="#8a4a30"><path d="M.500.500l5.500 5.500L11.500.500"/></svg><svg class="ml-[6px]" width="9" height="9" stroke="#444"><path d="M.500.500l8 8M8.500.500l-8 8"/></svg></div>
        </div>
        <div class="h-[32px] pl-[8px] pt-[11px]">Details</div>
        <div class="w-[170px] h-[28px] bg-white border border-dashed border-[#c8c6c4] flex items-center pl-[10px] pt-px">Add data fields here</div>
      </div>
      <div class="w-[6px] h-[102px] mt-[2px] rounded-[3px] bg-[#d2d0ce]"></div>
    </div>
  </aside>

  <!-- Data -->
  <aside class="w-[180px] shrink-0 flex flex-col">
    <div class="h-[36px] pt-[2px] flex items-center pl-[8px]"><span class="w-[152px] text-[15px] font-semibold tracking-[-0.100px]">Data</span><svg width="12" height="13" fill="none" stroke="#252423" stroke-width="1.200"><path d="M.500.500l5.500 6-5.500 6M6.500.500l5.500 6-5.500 6"/></svg></div>
    <div class="ml-[5px] mt-[9px] w-[171px] h-[24px] bg-white border border-[#c8c6c4] border-b-[#605e5c] rounded-[4px] flex items-center text-[13.500px] text-[#605e5c]"><svg class="ml-[11px]" width="15" height="15" fill="none" stroke="#484644"><circle cx="6" cy="6" r="5"/><path d="M9.500 9.500l5 5"/></svg><span class="ml-[6px]">Search</span></div>
    <div class="mt-[9px] pl-[15px] flex flex-col text-[11.500px]">
      <div class="h-[24px] flex items-center"><svg width="7" height="12" fill="none" stroke="#484644"><path d="M.500.500L6 6 .500 11.500"/></svg><svg class="ml-[7px]" width="12" height="12" fill="none" stroke="#252423"><rect x=".5" y=".5" width="11" height="11" rx="1.500"/><path d="M.500 4h11M.500 8h11M4 .500v11M8 .500v11"/></svg><span class="ml-[6px] mt-[2px] tracking-[-0.120px]">employee_attrition_da...</span></div>
      <div class="h-[24px] flex items-center"><svg width="7" height="12" fill="none" stroke="#484644"><path d="M.500.500L6 6 .500 11.500"/></svg><svg class="ml-[7px] overflow-visible" width="12" height="12" fill="none" stroke="#252423"><rect x=".5" y=".5" width="11" height="11" rx="1.500"/><path d="M.500 4h11M.500 8h11M4 .500v11M8 .500v11"/><circle cx="12" cy="11.500" r="6" fill="#117865" stroke="none"/><path d="M9.500 11.500l2 2 3-3.500" stroke="#fff" stroke-width="1.500"/></svg><span class="ml-[6px] mt-[2px] tracking-[-0.110px]">marriage_divorce_indi...</span></div>
      <div class="h-[24px] flex items-center"><svg width="7" height="12" fill="none" stroke="#484644"><path d="M.500.500L6 6 .500 11.500"/></svg><svg class="ml-[7px]" width="12" height="12" fill="none" stroke="#252423"><rect x=".5" y=".5" width="11" height="11" rx="1.500"/><path d="M.500 4h11M.500 8h11M4 .500v11M8 .500v11"/></svg><span class="ml-[6px] mt-[2px] tracking-[-0.200px]">sample superstore</span></div>
    </div>
  </aside>
</main>

<!-- Status bar -->
<footer class="h-[24px] shrink-0 border-t border-[#d8d6d4] flex items-center text-[#484644] text-[12px]">
  <span class="ml-[4px] mt-[3px] w-[1150px] tracking-[-0.200px]">Page 3 of 5</span>
  <svg width="124" height="12" viewBox="0 0 124 12" fill="none" stroke="#605e5c"><path d="M0 6.500h5" stroke-width="1.300"/><path d="M9 6.500h100M115 6.500h8M119 2.500v8"/><path d="M57 1h4v11h-4z" fill="#605e5c" stroke="none"/></svg>
  <span class="ml-[12px] mt-[1px] w-[30px] text-[#605e5c]">100%</span>
  <svg class="ml-[12px]" width="16" height="12" fill="none" stroke="#605e5c"><path d="M.500.500h15v11H.500zM3 5V3h2M11 3h2v2M13 7.500v2h-2M5 9.500H3v-2"/></svg>
</footer>

<!-- Windows taskbar -->
<footer class="h-[41px] shrink-0 border-t border-black bg-gradient-to-r from-[#001a24] to-[#020919] flex text-white">
  <div class="w-[48px] shrink-0 flex items-center justify-center"><svg width="16" height="16" fill="#fff"><path d="M0 2.300l7.300-1v6.300H0zM8.200 1.200L16 0v7.600H8.200zM0 8.500h7.300v6.300L0 13.800zM8.200 8.500H16V16l-7.800-1.100z"/></svg></div>
  <div class="w-[288px] shrink-0 bg-[#f2f2f2] border border-[#b8b8b8] flex items-center text-[#333] text-[14.500px] tracking-[-0.300px]">
    <svg class="ml-[11px] shrink-0" width="17" height="17" fill="none" stroke="#222" stroke-width="1.300"><circle cx="10.500" cy="6" r="5"/><path d="M7 9.500l-6 6"/></svg>
    <span class="ml-[11px] mt-px w-[176px] shrink-0">Type here to search</span>
    <svg class="shrink-0" width="62" height="26" viewBox="0 0 62 26"><path d="M24 1c2.500 0 2.500 7 5 9.500s7 1 7 3.500-5 1.500-7.500 4-2 7-4.500 7-2.500-5-5-7.500-6-1-6-3.500 4-1 6.500-3.500S21.500 1 24 1z" fill="#fcc52a"/><path d="M46 11c1.300 0 1.500 3 2.700 4s3.300.5 3.300 2-2.300 1-3.500 2-1.200 3.500-2.500 3.500-1.300-2.500-2.500-3.500-2.800-.5-2.800-2 1.600-1 2.800-2 1.200-4 2.500-4z" fill="#fcc52a"/><path d="M4 18l2 2.500 4-1-2 3 1 3.500-3.500-1.500L2 26l.5-3.500-2-2.500 3 .5z" fill="#1aa3e8"/><circle cx="40.500" cy="3" r="2" fill="#f26b35"/><circle cx="58" cy="22" r="2" fill="#8dc63f"/></svg>
  </div>
  <div class="w-[49px] shrink-0 flex items-center justify-center"><svg width="17" height="17" fill="none" stroke="#fff"><path d="M1.500 4.500h9v8h-9zM.500 0v2.500h11V0M.500 17v-2.500h11V17M15.500 0v3M15.500 8v9"/><path d="M14 4h3v3h-3z" fill="#fff" stroke="none"/></svg></div>
  <div class="w-[51px] shrink-0 flex items-center justify-center"><svg width="23" height="23" viewBox="0 0 32 30"><use href="#copilot"/></svg></div>
  <div class="w-[48px] shrink-0 flex items-center justify-center"><svg width="24" height="24" viewBox="0 0 24 24"><defs><linearGradient id="edG" x1="0" y1="0" x2="1" y2=".3"><stop offset="0" stop-color="#1f9ce0"/><stop offset=".6" stop-color="#35c7c0"/><stop offset="1" stop-color="#6be04c"/></linearGradient></defs><circle cx="12" cy="12" r="12" fill="#1270c8"/><path d="M0 11C1 4 6 0 12 0c7 0 12 5 12 10.500 0 4-3 6-6 6s-4.500-1.500-3.500-3c1-1.500.5-5-3.500-5C6 8.500 0 9 0 11z" fill="url(#edG)"/><path d="M9 13c0 5 5 8 12 6-5 1-10-1-9-6 .3-1.500-3-2-3 0z" fill="#001420"/><path d="M8 11c-2 5 0 11 7 13 3-.5 6-2.500 7.500-5C17 21 9 19 11 12z" fill="#0f58a8"/><path d="M11.500 12.500c1-2 3 0 2.500 1.500-.5 2 2 3.500 6 2.500-2 1.500-9 1-8.500-4z" fill="#001420"/></svg></div>
  <div class="w-[49px] shrink-0 flex justify-center"><div class="w-[40px] border-b-2 border-[#76b9ed] flex items-center justify-center pb-[1px]"><svg width="22" height="19"><path d="M0 .500h8l2 2h11v15H0z" fill="#e0a010"/><path d="M0 4h21.500v14H0z" fill="#ffd968"/><path d="M4 18v-7h14v7h-3v-4H7v4z" fill="#3a96dd"/></svg></div></div>
  <div class="w-[49px] shrink-0 flex items-center justify-center"><svg width="23" height="24"><path d="M6.500 7V2.500q0-1.500 1.500-1.500h7q1.500 0 1.500 1.500V7" fill="none" stroke="#2aaae2" stroke-width="1.700"/><path d="M0 5h23v15q0 3-3 3H3q-3 0-3-3z" fill="#f4f6f8"/><path d="M7 9.500h4v4H7z" fill="#f25022"/><path d="M12 9.500h4v4h-4z" fill="#7fba00"/><path d="M7 14.500h4v4H7z" fill="#00a4ef"/><path d="M12 14.500h4v4h-4z" fill="#ffb900"/></svg></div>
  <div class="w-[50px] shrink-0 flex items-center justify-center"><svg width="25" height="24"><path d="M6 6L14 1l10 6v14q0 2-2 2H8q-2 0-2-2z" fill="#28a8ea"/><path d="M8 5l8-4 5 3-9 6z" fill="#123f8c"/><path d="M24 11L8 22q0 1 2 1h12q2 0 2-2z" fill="#1a78d4"/><rect x="0" y="5" width="15" height="15" rx="1.500" fill="#0b64c0"/><ellipse cx="7.500" cy="12.500" rx="3.300" ry="3.700" fill="none" stroke="#fff" stroke-width="1.800"/></svg></div>
  <div class="w-[48px] shrink-0 flex items-center justify-center"><svg width="24" height="24" viewBox="0 0 24 24"><g id="chrome"><circle cx="12" cy="12" r="12" fill="#fbc116"/><path d="M12 0a12 12 0 0 1 10.400 6H12a6 6 0 0 0-5.200 3L1.600 6A12 12 0 0 1 12 0z" fill="#ea4335"/><path d="M1.600 6l5.200 9a6 6 0 0 0 5.200 3l-3 5.600A12 12 0 0 1 1.600 6z" fill="#34a853"/><path d="M12 18l-3 5.600L14 18z" fill="#34a853"/><circle cx="12" cy="12" r="6" fill="#fff"/><circle cx="12" cy="12" r="4.500" fill="#4285f4"/></g></svg></div>
  <div class="w-[50px] shrink-0 flex justify-center"><div class="w-[40px] border-b-2 border-[#76b9ed] flex items-center justify-center"><svg class="overflow-visible mt-[2px]" width="24" height="24" viewBox="0 0 24 24"><use href="#chrome"/><circle cx="18.500" cy="18" r="8" fill="#7e57c2"/><text x="18.500" y="21.500" font-size="11" fill="#fff" text-anchor="middle">m</text></svg></div></div>
  <div class="w-[48px] shrink-0 h-[40px] bg-[#33434e] border-r-[4px] border-[#26343f] flex items-center justify-center shadow-[inset_0_-2px_0_#76b9ed]"><svg class="ml-[3px]" width="20" height="24"><rect x="10" y="0" width="9" height="24" rx="1" fill="#d18a0a"/><rect x="5" y="6" width="9" height="18" rx="1" fill="#ecb91c"/><rect x="0" y="12" width="9" height="12" rx="1" fill="#f7dd5e"/></svg></div>
  <div class="w-[50px] shrink-0 flex justify-center"><div class="w-[40px] border-b-2 border-[#76b9ed] flex items-center justify-center"><svg class="overflow-visible mt-[2px]" width="26" height="25"><path d="M1.500 23l1.600-5.700A10.500 10.500 0 1 1 7.200 21.500z" fill="none" stroke="#25d366" stroke-width="2.300"/><path d="M8.500 6.500c1-.7 1.700 0 2.500 2.500-.7 1.500-.8 1.500 1 3.300 1.500 1.300 2 1 3-.3 2.500 1 2.700 1.500 2.300 2.500-2 3-5.300 1.500-8-1.200C6.500 10.500 6.300 8 8.500 6.500z" fill="#25d366"/><circle cx="24.500" cy="19" r="8" fill="#1c2529" stroke="#8b9194"/><text x="24.500" y="23" font-size="11" font-weight="600" fill="#fff" text-anchor="middle">1</text></svg></div></div>
  <div class="w-[48px] shrink-0 bg-[#a35c28] border-b-2 border-[#ff7a1a] flex items-center justify-center"><svg width="22" height="22"><defs><linearGradient id="phG" x1="0" y1="0" x2="1" y2="1"><stop offset="0" stop-color="#1f4fa8"/><stop offset="1" stop-color="#1a86d8"/></linearGradient></defs><rect width="22" height="22" rx="2" fill="url(#phG)"/><path d="M0 20L9 9.500q1.500-1.500 3 0L22 20q0 2-2 2H2q-2 0-2-2z" fill="#43c3f7"/><circle cx="16" cy="4.500" r="2" fill="#fff"/></svg></div>
  <div class="ml-[104px] w-[20px] shrink-0 flex items-center"><svg width="20" height="20"><defs><linearGradient id="sun" x1="0" y1="0" x2=".6" y2="1"><stop offset="0" stop-color="#ffc61a"/><stop offset="1" stop-color="#f26a0a"/></linearGradient></defs><circle cx="10" cy="10" r="10" fill="url(#sun)"/></svg></div>
  <div class="ml-[10px] w-[101px] shrink-0 flex items-center text-[14px] tracking-[-0.350px]"><span class="w-[38px]">21°C</span><span>Sunny</span></div>
  <div class="shrink-0 flex items-center">
    <svg width="12" height="8" fill="none" stroke="#fff" stroke-width="1.300"><path d="M.500 6.500L6 1l5.500 5.500"/></svg>
    <svg class="ml-[12px]" width="12" height="16" fill="none" stroke="#fff" stroke-width="1.200"><rect x="1" y="4" width="7" height="8" rx="1.500"/><path d="M8 6.500l3-1.500v6L8 9.500M2.500 1.500q2.500-1.500 5 0M2.500 14.500q2.500 1.500 5 0"/></svg>
    <svg class="ml-[10px] overflow-visible" width="16" height="15" fill="none" stroke="#fff" stroke-width="1.200"><path d="M1 2l14-1v13l-14-1zM5 8c0-4 4-4 6-2M11 3v3H8M11 8c0 3-4 3-6 1"/><circle cx="12.500" cy="12.500" r="3.500" fill="#ff9500" stroke="none"/></svg>
    <svg class="ml-[9px]" width="15" height="9" fill="none" stroke="#fff"><path d="M.500.500h12v8H.500zM13.500 3v3"/><path d="M2 2h8v5H2z" fill="#fff" stroke="none"/></svg>
    <svg class="ml-[10px] mt-[2px]" width="14" height="13" fill="none" stroke="#fff" stroke-width="1.100"><path d="M1 12C1 6 6 1 13 1M4 12c0-4 4-8 9-8M7 12c0-3 3-5 6-5"/><circle cx="11.500" cy="11" r="1.500" fill="#fff" stroke="none"/></svg>
    <svg class="ml-[8px]" width="15" height="12" fill="none" stroke="#fff" stroke-width="1.100"><path d="M1 4.500h2L6.500 1v10L3 7.500H1zM9 4l5 5M14 4L9 9"/></svg>
  </div>
  <div class="ml-[9px] w-[54px] shrink-0 flex flex-col items-center pt-[2px] leading-[18px] tracking-[-0.300px]"><span>8:07 AM</span><span>2/13/2025</span></div>
  <div class="ml-[17px] shrink-0 flex items-center"><svg width="16" height="16" fill="none" stroke="#fff" stroke-width="1.200"><path d="M.500 1h15v11H10.500L8 15l-2.500-3H.500z"/></svg></div>
  <div class="ml-[20px] w-px bg-[#59606a]"></div>
</footer>
</body>
</html>
